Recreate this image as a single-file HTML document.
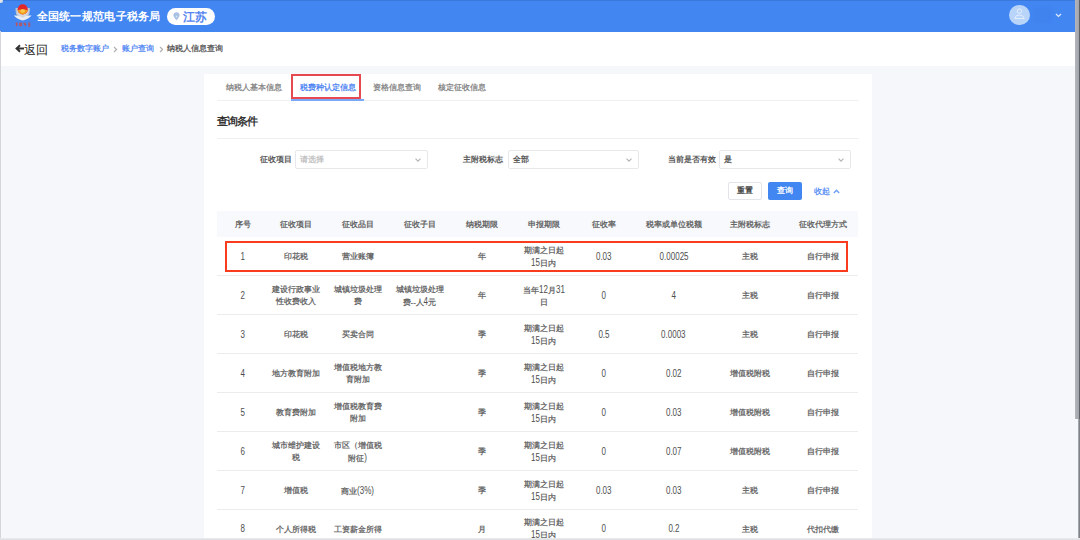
<!DOCTYPE html>
<html><head><meta charset="utf-8">
<style>
*{box-sizing:border-box;margin:0;padding:0}
html,body{width:1080px;height:540px;overflow:hidden;background:#f6f7fa;font-family:"Liberation Sans",sans-serif;color:#333}
.abs{position:absolute}
#hdr{position:absolute;left:0;top:0;width:1080px;height:32px;background:#4286f2;border-top:1px solid #3a78dc}
#title{position:absolute;left:36.5px;top:8.5px;font-size:11.3px;letter-spacing:0.3px;line-height:14px;color:#fff;white-space:nowrap;font-weight:bold}
#pill{position:absolute;left:167px;top:8px;width:48px;height:17px;border-radius:9px;background:#fff}
#pill span{position:absolute;left:16px;top:1.5px;font-size:11.5px;line-height:15px;color:#5585ef;white-space:nowrap;font-weight:bold}
#sub{position:absolute;left:0;top:32px;width:1080px;height:34px;background:#fff}
#back{position:absolute;left:24px;top:42.5px;font-size:12px;line-height:14px;color:#222;white-space:nowrap}
.bc{position:absolute;top:43px;font-size:8px;line-height:11px;white-space:nowrap;font-weight:bold}
#card{position:absolute;left:204px;top:74px;width:668px;height:480px;background:#fff}
.tab{position:absolute;top:82px;font-size:8px;line-height:11px;color:#888;white-space:nowrap;font-weight:bold}
.hline{position:absolute;height:1px;background:#eef0f2}
.lbl{position:absolute;top:154px;font-size:8px;line-height:11px;color:#5a5a5a;white-space:nowrap;font-weight:bold}
.sel{position:absolute;top:150px;height:18.5px;border:1px solid #e8e8ea;border-radius:2px;background:#fff}
.sel span{position:absolute;left:4.2px;top:3px;font-size:8px;line-height:11px;color:#555;white-space:nowrap;font-weight:bold}
.chev{position:absolute;right:6px;top:6.8px;width:6px;height:4px;overflow:visible}
.btn{position:absolute;top:182px;height:18px;border-radius:2px;font-size:8px;line-height:18px;text-align:center;font-weight:bold}
#thead{position:absolute;left:217px;top:211px;width:641px;height:26px;background:#f7f9fc}
.row{position:absolute;left:0;width:1080px}
.cell{position:absolute;top:0;bottom:0;width:80px;display:flex;align-items:center;justify-content:center;text-align:center;font-size:8px;line-height:12px;color:#6b6b6b;font-weight:bold;white-space:nowrap;padding-top:2.6px}
.th{font-weight:bold;color:#666;padding-top:2px}
.n{display:inline-block;font-size:10px;transform:translateY(-0.5px) scaleX(0.8);line-height:12px;font-weight:normal;color:#4e4e4e}
.rb{position:absolute;left:217px;width:641px;height:1.2px;background:#ebecee}
</style></head><body>
<div id="hdr"></div>
<svg class="abs" style="left:8px;top:0" width="32" height="32" viewBox="0 0 32 32">
<path d="M8.2 8 Q7.6 14.5 11.5 17.6 L17.9 17.6 Q21.8 14.5 21.2 8" fill="#c5cad3" stroke="#bfc4cd" stroke-width="1.2"/>
<circle cx="14.7" cy="11.2" r="5.6" fill="#d5d9e0"/>
<circle cx="14.7" cy="9.4" r="5.1" fill="#e3262a"/>
<path d="M9.7 10.2 Q14.7 8.2 19.7 10.2 Q19 13.8 14.7 14.5 Q10.4 13.8 9.7 10.2Z" fill="#f39a1f"/>
<ellipse cx="14.7" cy="11" rx="2.3" ry="1.7" fill="#f8c84a"/>
<path d="M5.8 15.6 Q11 15 14.7 17.4 Q18.4 15 23.6 15.6 Q20 19.5 14.7 20.4 Q9.4 19.5 5.8 15.6Z" fill="#e9edf3"/>
<g fill="none" stroke="#d8473a" stroke-width="0.9" opacity="0.85">
<path d="M7.6 23.2h2.2M8.7 22.6v3.8M7.8 24.6h1.8"/>
<path d="M11.6 23h2.2v2.6h-2.2zM12.7 23v3.4"/>
<path d="M15.6 22.8l1 1.2M16.4 23.2h1.6M16.2 24.5h2M17.2 23.2v3"/>
<path d="M20 23h2.4M20.3 24.6h2M21.2 23v3.3M20.2 26.2h2.2"/>
</g>
</svg>
<div id="title">全国统一规范电子税务局</div>
<div id="pill"><svg class="abs" style="left:6.3px;top:4px" width="7" height="9" viewBox="0 0 7 9"><path d="M3.5 8.2 Q0.4 5 0.4 3.3 A3.1 3.1 0 0 1 6.6 3.3 Q6.6 5 3.5 8.2Z" fill="#a9c1e4"/><circle cx="3.5" cy="4.6" r="0.8" fill="#dbe6f5"/></svg><span>江苏</span></div>
<div class="abs" style="left:1009.3px;top:4.7px;width:20.6px;height:20.6px;border-radius:50%;background:#b8d4f9"></div>
<div class="abs" style="left:1033px;top:7px;width:19px;height:16px;border-radius:3px;background:rgba(20,60,160,0.035);filter:blur(1.5px)"></div>
<svg class="abs" style="left:1013px;top:7px" width="13" height="13" viewBox="0 0 13 13"><circle cx="6.4" cy="4.1" r="2.2" fill="none" stroke="#e8f1fd" stroke-width="0.9"/><path d="M1.6 11.5 Q2.4 8 6.4 8 Q10.4 8 11.3 11.5Z" fill="none" stroke="#e8f1fd" stroke-width="0.9"/></svg>
<svg class="abs" style="left:1055px;top:13px" width="7" height="5" viewBox="0 0 7 5"><path d="M1 1 L3.5 3.5 L6 1" fill="none" stroke="#dfe9fb" stroke-width="1.2"/></svg>
<div id="sub"></div>
<svg class="abs" style="left:15px;top:44px" width="10" height="9" viewBox="0 0 10 9"><path d="M1.5 4.5H9M5 1.2L1.5 4.5 5 7.8" fill="none" stroke="#333" stroke-width="1.9"/></svg>
<div id="back">返回</div>
<div class="bc" style="left:61px;color:#5a8cf4">税务数字账户</div>
<svg class="abs" style="left:113px;top:46px" width="5" height="7" viewBox="0 0 5 7"><path d="M1 1 L3.6 3.5 L1 6" fill="none" stroke="#b0b0b0" stroke-width="1.2"/></svg>
<div class="bc" style="left:122px;color:#5a8cf4">账户查询</div>
<svg class="abs" style="left:158.5px;top:46px" width="5" height="7" viewBox="0 0 5 7"><path d="M1 1 L3.6 3.5 L1 6" fill="none" stroke="#b0b0b0" stroke-width="1.2"/></svg>
<div class="bc" style="left:167px;color:#5a5a5a">纳税人信息查询</div>

<div id="card"></div>
<div class="tab" style="left:226px">纳税人基本信息</div>
<div class="tab" style="left:300px;color:#4f86f2">税费种认定信息</div>
<div class="tab" style="left:373px">资格信息查询</div>
<div class="tab" style="left:438px">核定征收信息</div>
<div class="hline" style="left:217px;top:100px;width:642px"></div>
<div class="abs" style="left:291px;top:99.3px;width:72.6px;height:1.5px;background:#7aa8f6"></div>
<div class="abs" style="left:290.8px;top:74px;width:70.3px;height:24.5px;border:2px solid #e44a4f"></div>

<div class="abs" style="left:217px;top:115px;font-size:10.5px;letter-spacing:-1.1px;line-height:13px;font-weight:bold;color:#333">查询条件</div>
<div class="hline" style="left:217px;top:138px;width:642px"></div>

<div class="lbl" style="left:260px">征收项目</div>
<div class="sel" style="left:295px;width:133px"><span style="color:#c2c2c2">请选择</span><svg class="chev" viewBox="0 0 6 4"><path d="M0.5 0.6 L3 3.1 L5.5 0.6" fill="none" stroke="#b3b5ba" stroke-width="1.15"/></svg></div>
<div class="lbl" style="left:463px">主附税标志</div>
<div class="sel" style="left:508px;width:131px"><span>全部</span><svg class="chev" viewBox="0 0 6 4"><path d="M0.5 0.6 L3 3.1 L5.5 0.6" fill="none" stroke="#b3b5ba" stroke-width="1.15"/></svg></div>
<div class="lbl" style="left:668px">当前是否有效</div>
<div class="sel" style="left:719px;width:132px"><span>是</span><svg class="chev" viewBox="0 0 6 4"><path d="M0.5 0.6 L3 3.1 L5.5 0.6" fill="none" stroke="#b3b5ba" stroke-width="1.15"/></svg></div>

<div class="btn" style="left:728px;width:34px;border:1px solid #e3e5ea;line-height:16.5px;color:#444">重置</div>
<div class="btn" style="left:768px;width:34px;background:#4286f2;color:#fff">查询</div>
<div class="abs" style="left:814px;top:185.8px;font-size:8px;line-height:12px;color:#6294f5;font-weight:bold">收起</div>
<svg class="abs" style="left:833px;top:189.3px" width="7" height="5" viewBox="0 0 7 5"><path d="M0.8 4 L3.5 1.3 L6.2 4" fill="none" stroke="#6f9ff6" stroke-width="1.4"/></svg>

<div id="thead"></div>
<!--TABLE-->
<div class="row" style="top:211px;height:26px">
<div class="cell th" style="left:202.60px">序号</div>
<div class="cell th" style="left:255.50px">征收项目</div>
<div class="cell th" style="left:317.50px">征收品目</div>
<div class="cell th" style="left:379.50px">征收子目</div>
<div class="cell th" style="left:442.00px">纳税期限</div>
<div class="cell th" style="left:504.00px">申报期限</div>
<div class="cell th" style="left:563.50px">征收率</div>
<div class="cell th" style="left:633.70px">税率或单位税额</div>
<div class="cell th" style="left:710.00px">主附税标志</div>
<div class="cell th" style="left:783.40px">征收代理方式</div>
</div>
<div class="row" style="top:237px;height:38.39999999999998px">
<div class="cell" style="left:202.60px"><div><span class="n" style="margin:0 -0.56px">1</span></div></div>
<div class="cell" style="left:255.50px"><div>印花税</div></div>
<div class="cell" style="left:317.50px"><div>营业账簿</div></div>
<div class="cell" style="left:442.00px"><div>年</div></div>
<div class="cell" style="left:504.00px"><div>期满之日起<br><span class="n" style="margin:0 -1.11px">15</span>日内</div></div>
<div class="cell" style="left:563.50px"><div><span class="n" style="margin:0 -1.95px">0.03</span></div></div>
<div class="cell" style="left:633.70px"><div><span class="n" style="margin:0 -3.61px">0.00025</span></div></div>
<div class="cell" style="left:710.00px"><div>主税</div></div>
<div class="cell" style="left:783.40px"><div>自行申报</div></div>
</div>
<div class="rb" style="top:275.2px"></div>
<div class="row" style="top:275.4px;height:39.10000000000002px">
<div class="cell" style="left:202.60px"><div><span class="n" style="margin:0 -0.56px">2</span></div></div>
<div class="cell" style="left:255.50px"><div>建设行政事业<br>性收费收入</div></div>
<div class="cell" style="left:317.50px"><div>城镇垃圾处理<br>费</div></div>
<div class="cell" style="left:379.50px"><div>城镇垃圾处理<br>费--人<span class="n" style="margin:0 -0.56px">4</span>元</div></div>
<div class="cell" style="left:442.00px"><div>年</div></div>
<div class="cell" style="left:504.00px"><div>当年<span class="n" style="margin:0 -1.11px">12</span>月<span class="n" style="margin:0 -1.11px">31</span><br>日</div></div>
<div class="cell" style="left:563.50px"><div><span class="n" style="margin:0 -0.56px">0</span></div></div>
<div class="cell" style="left:633.70px"><div><span class="n" style="margin:0 -0.56px">4</span></div></div>
<div class="cell" style="left:710.00px"><div>主税</div></div>
<div class="cell" style="left:783.40px"><div>自行申报</div></div>
</div>
<div class="rb" style="top:314.3px"></div>
<div class="row" style="top:314.5px;height:39.0px">
<div class="cell" style="left:202.60px"><div><span class="n" style="margin:0 -0.56px">3</span></div></div>
<div class="cell" style="left:255.50px"><div>印花税</div></div>
<div class="cell" style="left:317.50px"><div>买卖合同</div></div>
<div class="cell" style="left:442.00px"><div>季</div></div>
<div class="cell" style="left:504.00px"><div>期满之日起<br><span class="n" style="margin:0 -1.11px">15</span>日内</div></div>
<div class="cell" style="left:563.50px"><div><span class="n" style="margin:0 -1.39px">0.5</span></div></div>
<div class="cell" style="left:633.70px"><div><span class="n" style="margin:0 -3.06px">0.0003</span></div></div>
<div class="cell" style="left:710.00px"><div>主税</div></div>
<div class="cell" style="left:783.40px"><div>自行申报</div></div>
</div>
<div class="rb" style="top:353.3px"></div>
<div class="row" style="top:353.5px;height:39.0px">
<div class="cell" style="left:202.60px"><div><span class="n" style="margin:0 -0.56px">4</span></div></div>
<div class="cell" style="left:255.50px"><div>地方教育附加</div></div>
<div class="cell" style="left:317.50px"><div>增值税地方教<br>育附加</div></div>
<div class="cell" style="left:442.00px"><div>季</div></div>
<div class="cell" style="left:504.00px"><div>期满之日起<br><span class="n" style="margin:0 -1.11px">15</span>日内</div></div>
<div class="cell" style="left:563.50px"><div><span class="n" style="margin:0 -0.56px">0</span></div></div>
<div class="cell" style="left:633.70px"><div><span class="n" style="margin:0 -1.95px">0.02</span></div></div>
<div class="cell" style="left:710.00px"><div>增值税附税</div></div>
<div class="cell" style="left:783.40px"><div>自行申报</div></div>
</div>
<div class="rb" style="top:392.3px"></div>
<div class="row" style="top:392.5px;height:38.89999999999998px">
<div class="cell" style="left:202.60px"><div><span class="n" style="margin:0 -0.56px">5</span></div></div>
<div class="cell" style="left:255.50px"><div>教育费附加</div></div>
<div class="cell" style="left:317.50px"><div>增值税教育费<br>附加</div></div>
<div class="cell" style="left:442.00px"><div>季</div></div>
<div class="cell" style="left:504.00px"><div>期满之日起<br><span class="n" style="margin:0 -1.11px">15</span>日内</div></div>
<div class="cell" style="left:563.50px"><div><span class="n" style="margin:0 -0.56px">0</span></div></div>
<div class="cell" style="left:633.70px"><div><span class="n" style="margin:0 -1.95px">0.03</span></div></div>
<div class="cell" style="left:710.00px"><div>增值税附税</div></div>
<div class="cell" style="left:783.40px"><div>自行申报</div></div>
</div>
<div class="rb" style="top:431.2px"></div>
<div class="row" style="top:431.4px;height:39.10000000000002px">
<div class="cell" style="left:202.60px"><div><span class="n" style="margin:0 -0.56px">6</span></div></div>
<div class="cell" style="left:255.50px"><div>城市维护建设<br>税</div></div>
<div class="cell" style="left:317.50px"><div>市区（增值税<br>附征<span class="n" style="margin:0 -0.33px">)</span></div></div>
<div class="cell" style="left:442.00px"><div>季</div></div>
<div class="cell" style="left:504.00px"><div>期满之日起<br><span class="n" style="margin:0 -1.11px">15</span>日内</div></div>
<div class="cell" style="left:563.50px"><div><span class="n" style="margin:0 -0.56px">0</span></div></div>
<div class="cell" style="left:633.70px"><div><span class="n" style="margin:0 -1.95px">0.07</span></div></div>
<div class="cell" style="left:710.00px"><div>增值税附税</div></div>
<div class="cell" style="left:783.40px"><div>自行申报</div></div>
</div>
<div class="rb" style="top:470.3px"></div>
<div class="row" style="top:470.5px;height:38.89999999999998px">
<div class="cell" style="left:202.60px"><div><span class="n" style="margin:0 -0.56px">7</span></div></div>
<div class="cell" style="left:255.50px"><div>增值税</div></div>
<div class="cell" style="left:317.50px"><div>商业<span class="n" style="margin:0 -2.11px">(3%)</span></div></div>
<div class="cell" style="left:442.00px"><div>季</div></div>
<div class="cell" style="left:504.00px"><div>期满之日起<br><span class="n" style="margin:0 -1.11px">15</span>日内</div></div>
<div class="cell" style="left:563.50px"><div><span class="n" style="margin:0 -1.95px">0.03</span></div></div>
<div class="cell" style="left:633.70px"><div><span class="n" style="margin:0 -1.95px">0.03</span></div></div>
<div class="cell" style="left:710.00px"><div>主税</div></div>
<div class="cell" style="left:783.40px"><div>自行申报</div></div>
</div>
<div class="rb" style="top:509.2px"></div>
<div class="row" style="top:509.4px;height:38.60000000000002px">
<div class="cell" style="left:202.60px"><div><span class="n" style="margin:0 -0.56px">8</span></div></div>
<div class="cell" style="left:255.50px"><div>个人所得税</div></div>
<div class="cell" style="left:317.50px"><div>工资薪金所得</div></div>
<div class="cell" style="left:442.00px"><div>月</div></div>
<div class="cell" style="left:504.00px"><div>期满之日起<br><span class="n" style="margin:0 -1.11px">15</span>日内</div></div>
<div class="cell" style="left:563.50px"><div><span class="n" style="margin:0 -0.56px">0</span></div></div>
<div class="cell" style="left:633.70px"><div><span class="n" style="margin:0 -1.39px">0.2</span></div></div>
<div class="cell" style="left:710.00px"><div>主税</div></div>
<div class="cell" style="left:783.40px"><div>代扣代缴</div></div>
</div>
<!--/TABLE-->

<div class="abs" style="left:225px;top:240.5px;width:622.5px;height:31.5px;border:2px solid #f93c1e"></div>
<div class="abs" style="left:1075px;top:0;width:4px;height:419px;background:linear-gradient(90deg,#b4b6bc,#a2a4ab)"></div>
<div class="abs" style="left:1079px;top:0;width:1px;height:419px;background:#5f6268"></div>
<div class="abs" style="left:1078px;top:419px;width:2px;height:121px;background:linear-gradient(90deg,#b8bac2,#6c6f75)"></div>
<div class="abs" style="left:0;top:31px;width:1px;height:509px;background:#d5d6da"></div>
<div class="abs" style="left:0;top:538px;width:1080px;height:2px;background:linear-gradient(180deg,#ececee,#dcdde0)"></div>
<div class="abs" style="left:0;top:0;width:3px;height:3px;background:radial-gradient(circle at 0 0,#e4e6ea 55%,rgba(228,230,234,0) 100%)"></div>
</body></html>
